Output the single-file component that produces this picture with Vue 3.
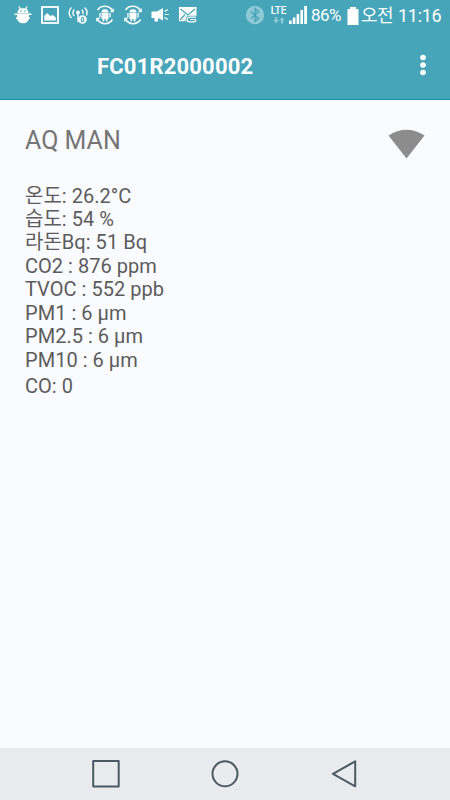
<script setup>
const title = 'FC01R2000002'
const readings = [
  { label: '온도: ', value: '26.2°C' },
  { label: '습도: ', value: '54 %' },
  { label: '라돈Bq: ', value: '51 Bq' },
  { label: 'CO2 : ', value: '876 ppm' },
  { label: 'TVOC : ', value: '552 ppb' },
  { label: 'PM1 : ', value: '6 µm' },
  { label: 'PM2.5 : ', value: '6 µm' },
  { label: 'PM10 : ', value: '6 µm' },
]
</script>

<template>
  <div class="screen">
    <header class="top">
      <div class="status">
        <div class="notifications">
          <svg class="icon" viewBox="0 0 22 22">
            <path d="M7 2.500l1.500 3M15 2.500l-1.500 3M2.500 10.300h17M4 14.300h14" stroke="#fff" stroke-width="1.400" />
            <path d="M5.500 9C5.500 5.500 8 4.300 11 4.300s5.500 1.200 5.500 4.700zM5 9.800h12v4c0 3.500-2.700 5.500-6 5.500s-6-2-6-5.500z" fill="#fff" />
            <circle cx="9" cy="7" r=".8" fill="#46a5b9" /><circle cx="13" cy="7" r=".8" fill="#46a5b9" />
          </svg>
          <svg class="icon" viewBox="0 0 22 22">
            <rect x="3" y="3" width="16" height="16" fill="none" stroke="#fff" stroke-width="1.800" />
            <path d="M5.300 16.500V12l3-3 3 3 2.500-1 3 2.500v3z" fill="#fff" />
          </svg>
          <svg class="icon" viewBox="0 0 22 22" fill="none" stroke="#fff" stroke-width="1.400">
            <path d="M4.500 3.500C1.300 6 1.300 11.500 4.500 14M7.300 5.500c-1.800 1.800-1.800 4.700 0 6.500M14.700 5.500c1.300 1.300 1.600 3 1.100 4.500M17.500 3.500c2.500 2 3 5 2 8M11 9v9" />
            <circle cx="11" cy="8.500" r="1.200" fill="#fff" />
            <circle cx="15.500" cy="15.500" r="4.300" fill="#fff" stroke="none" />
            <ellipse cx="15.500" cy="15.500" rx="1.300" ry="2.200" stroke="#46a5b9" stroke-width="1.100" />
          </svg>
          <svg v-for="n in 2" :key="n" class="icon" viewBox="0 0 22 22">
            <path d="M3.500 6C7 1 15 1 18.300 6.500M18.500 15.500C15 21 7 21 3.700 15.500" fill="none" stroke="#fff" stroke-width="1.500" />
            <path d="M19.800 4v4.200h-4zM2.200 18v-4.200h4z" fill="#fff" />
            <path d="M7.500 8C7.700 6 9 5.300 11 5.300s3.300.7 3.500 2.700zM7.500 8.500h7V15h-1v2.300h-1.800V15h-1.400v2.300H8.500V15h-1zM5.300 9h1.300v4.500H5.300zM15.400 9h1.300v4.500h-1.300z" fill="#fff" />
          </svg>
          <svg class="icon" viewBox="0 0 22 22">
            <path d="M2.500 7.500h5.500L14 4v12.500L9 14v3.500H5.500V14h-3z" fill="#fff" />
            <path d="M15.500 7.500l3.500-2M15.800 10.500h4M15.500 13.500l3.500 2" stroke="#fff" stroke-width="1.200" />
          </svg>
          <svg class="icon" viewBox="0 0 22 22">
            <path d="M2 3h17.500v8.800H12c-2 0-3.300 1.500-3.300 3.500v2H2z" fill="#fff" />
            <path d="M3.500 5l7.300 6L18 5M3 16l5-5.500" fill="none" stroke="#46a5b9" stroke-width="1.200" />
            <path d="M19 13.200h-6.500c-3.300 0-3.300 4.600 0 4.600h4.500c2.400 0 2.400-2.300 0-2.300h-4" fill="none" stroke="#fff" stroke-width="1.200" />
          </svg>
        </div>
        <div class="system">
          <svg class="bluetooth" viewBox="0 0 20 20">
            <circle cx="10" cy="10" r="9.200" fill="#8ec9d5" />
            <path d="M6 6.500l7.600 7L10 16.500v-13l3.600 3-7.600 7" fill="none" stroke="#46a5b9" stroke-width="1.400" />
          </svg>
          <div class="network">
            <span class="lte">LTE</span>
            <svg class="arrows" viewBox="0 0 12 7">
              <path d="M2 0h2v3h1.700L3 6.500.3 3H2zM8 6.500h2v-3h1.700L9 0 6.300 3.500H8z" fill="#8ec9d5" />
            </svg>
          </div>
          <svg class="signal" viewBox="0 0 18 18">
            <path d="M0 14.500h2.600V18H0zM3.800 11.500h2.600V18H3.800zM7.600 8h2.600v10H7.600zM11.400 4H14v14h-2.600zM15.200 0H18v18h-2.800z" fill="#fff" />
          </svg>
          <span class="percent">86%</span>
          <svg class="battery" viewBox="0 0 12 18">
            <path d="M3 0h6v2h2.500v16H.5V2H3z" fill="#fff" />
          </svg>
          <span class="meridiem">오전</span>
          <span class="clock">11:16</span>
        </div>
      </div>
      <div class="toolbar">
        <h1>{{ title }}</h1>
        <svg class="more" viewBox="0 0 6 22" fill="#fff">
          <circle cx="3" cy="3.500" r="2.800" /><circle cx="3" cy="11" r="2.800" /><circle cx="3" cy="18.500" r="2.800" />
        </svg>
      </div>
    </header>

    <main>
      <div class="device">
        <h2>AQ MAN</h2>
        <svg class="wifi" viewBox="0 0 37 30">
          <path d="M.5 6.500Q18.500-5 36.500 6.500L18.500 29.500z" fill="#8c8c8c" />
        </svg>
      </div>
      <div class="readings">
        <p v-for="item in readings" :key="item.label">{{ item.label }}{{ item.value }}</p>
        <p class="co">CO: 0</p>
      </div>
    </main>

    <nav>
      <svg viewBox="0 0 30 30"><rect x="2.200" y="2" width="25.500" height="25.500" /></svg>
      <svg viewBox="0 0 30 30"><circle cx="15" cy="14.800" r="12.500" /></svg>
      <svg viewBox="0 0 30 30"><path d="M26.200 2.300v25L4 14.800z" /></svg>
    </nav>
  </div>
</template>

<style>
body { margin: 0; }
</style>

<style scoped>
.screen {
  width: 450px;
  height: 800px;
  display: flex;
  flex-direction: column;
  background: #fafbff;
  font-family: Roboto, "Noto Sans CJK KR", sans-serif;
  overflow: hidden;
}
.top {
  height: 100px;
  box-sizing: border-box;
  background: #46a5b9;
  border-bottom: 1px solid #138fa6;
  color: #fff;
}
.status {
  height: 30px;
  display: flex;
  justify-content: space-between;
  padding: 0 9px 0 11.5px;
}
.notifications { display: flex; align-items: center; gap: 5.5px; }
.icon { width: 22px; height: 22px; display: block; }
.system { display: flex; align-items: center; }
.bluetooth { width: 20px; height: 20px; margin-right: 5px; }
.network { width: 17px; display: flex; flex-direction: column; align-items: center; }
.lte { font-size: 10px; line-height: 10px; font-weight: 500; letter-spacing: -0.1px; }
.arrows { width: 12px; height: 7px; margin-top: 1px; }
.signal { width: 18px; height: 18px; margin-left: 2px; }
.percent { width: 31px; margin-left: 4px; font-size: 17px; letter-spacing: -0.5px; line-height: 31px; }
.battery { width: 12px; height: 18px; margin-left: 4.5px; margin-top: 1px; }
.meridiem { width: 34px; margin-left: 2.5px; font-size: 18px; line-height: 31px; letter-spacing: -0.5px; white-space: nowrap; }
.clock { width: 43px; margin-left: 3px; font-size: 18px; line-height: 31px; letter-spacing: -0.3px; }
.toolbar {
  height: 69px;
  padding: 1px 24.5px 0 97px;
  box-sizing: border-box;
  display: flex;
  align-items: center;
  justify-content: space-between;
}
h1 { margin: 0; padding-top: 3px; font-size: 22px; line-height: 30px; font-weight: 700; letter-spacing: 0.18px; }
.more { width: 6px; height: 22px; }
main { flex: 1; padding: 24px 25px 0; }
.device { display: flex; justify-content: space-between; height: 60.5px; }
h2 { margin: 0; font-size: 25px; line-height: 34px; font-weight: 400; color: #757575; }
.wifi { width: 37px; height: 30px; margin-top: 4.5px; }
.readings { color: #5c5c5c; font-size: 20px; letter-spacing: 0.03px; }
p { margin: 0; height: 23.450px; line-height: 23.450px; white-space: pre; }
.co { margin-top: 3px; }
nav {
  height: 52px;
  background: #e9ebee;
  display: flex;
  align-items: center;
  justify-content: space-between;
  padding: 0 91px;
}
nav svg { width: 30px; height: 30px; fill: none; stroke: #4b5b66; stroke-width: 2; stroke-linejoin: round; }
</style>
